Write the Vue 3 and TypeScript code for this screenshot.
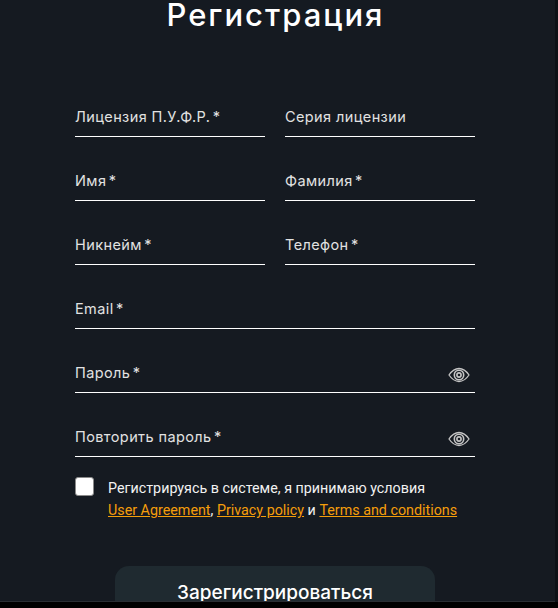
<script setup lang="ts">
interface Field { label: string; required?: boolean; wide?: boolean; eye?: boolean }
const fields: Field[] = [
  { label: 'Лицензия П.У.Ф.Р.', required: true },
  { label: 'Серия лицензии' },
  { label: 'Имя', required: true },
  { label: 'Фамилия', required: true },
  { label: 'Никнейм', required: true },
  { label: 'Телефон', required: true },
  { label: 'Email', required: true, wide: true },
  { label: 'Пароль', required: true, wide: true, eye: true },
  { label: 'Повторить пароль', required: true, wide: true, eye: true },
]
</script>

<template>
  <div class="screen">
    <main class="page">
      <h1 class="title">Регистрация</h1>
      <form class="form" @submit.prevent>
        <div class="grid">
          <label v-for="f in fields" :key="f.label" class="field" :class="{ wide: f.wide }">
            <span class="label">{{ f.label }}<span v-if="f.required" class="star"> *</span></span>
            <svg v-if="f.eye" class="eye" viewBox="0 0 22 16" width="22" height="16" fill="none" stroke="#c4c4c4">
              <path d="M1 8C4 3.6 7.2 1.5 11 1.5S18 3.6 21 8c-3 4.4-6.2 6.5-10 6.5S4 12.4 1 8Z" stroke-width="1.3" />
              <circle cx="11" cy="8" r="4.7" stroke-width="1.6" />
              <circle cx="11" cy="8" r="2.1" stroke-width="1.6" />
            </svg>
          </label>
        </div>
        <div class="agree">
          <span class="box"></span>
          <p class="terms">
            Регистрируясь в системе, я принимаю условия<br />
            <a href="#">User Agreement</a>, <a href="#">Privacy policy</a> и <a href="#">Terms and conditions</a>
          </p>
        </div>
        <button class="submit" type="submit">Зарегистрироваться</button>
      </form>
    </main>
  </div>
</template>

<style>
html, body { margin: 0; background: #000; }
</style>

<style scoped>
.screen {
  width: 558px;
  height: 608px;
  box-sizing: border-box;
  border-bottom: 6px solid #000;
  background: #0d1116;
  overflow: hidden;
}
.page {
  width: 555px;
  height: 602px;
  box-sizing: border-box;
  background: #151a21;
  overflow: hidden;
  border-bottom: 1px solid #2a2e33;
}
.title {
  margin: 0;
  height: 106px;
  padding-right: 4px;
  box-sizing: border-box;
  text-align: center;
  font: 500 31px/30px "Inter", sans-serif;
  color: #fff;
  letter-spacing: 2px;
}
.form {
  width: 400px;
  margin-left: 75px;
}
.grid {
  display: grid;
  grid-template-columns: 190px 190px;
  column-gap: 20px;
  row-gap: 33px;
}
.field {
  position: relative;
  display: flex;
  align-items: center;
  height: 30px;
  border-bottom: 1px solid #fff;
  color: #e2e2e2;
  font: 400 14.5px/20px "Inter", sans-serif;
  letter-spacing: 0.4px;
}
.label { position: relative; top: -4px; }
.star { letter-spacing: -1.6px; }
.wide { grid-column: 1 / -1; }
.eye {
  position: absolute;
  right: 5px;
  top: 5px;
}
.agree {
  display: flex;
  gap: 14px;
  margin-top: 20px;
}
.box {
  flex: none;
  width: 17px;
  height: 17px;
  background: #fff;
  border: 1px solid #8a8a8a;
  border-radius: 3px;
}
.terms {
  margin: 0;
  color: #f2f2f2;
  font: 400 14.3px/22px "Roboto", sans-serif;
}
.terms a { color: #f59e0b; text-decoration: underline; }
.submit {
  display: block;
  width: 320px;
  height: 60px;
  margin: 45px 0 0 40px;
  padding: 0 0 6px;
  background: #1f2a30;
  border: 0;
  border-radius: 14px;
  color: #fff;
  font: 500 19px/22px "Inter", sans-serif;
}
</style>
